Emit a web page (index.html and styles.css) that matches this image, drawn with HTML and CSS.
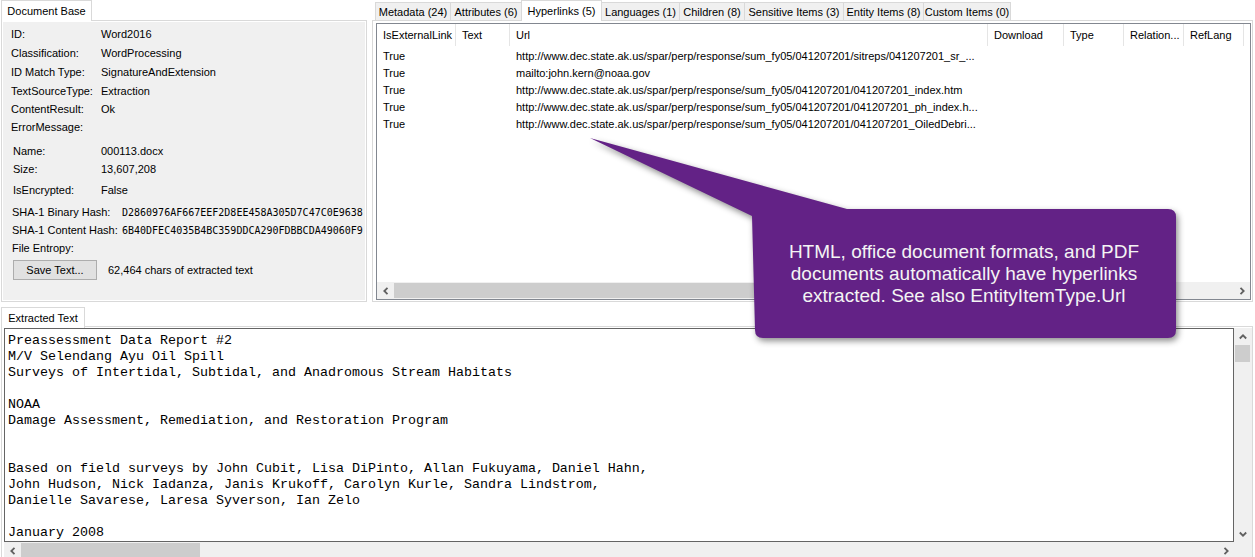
FILE: index.html
```html
<!DOCTYPE html>
<html>
<head>
<meta charset="utf-8">
<title>Document Base</title>
<link rel="stylesheet" href="styles.css">
</head>
<body>
<div class="app">
  <div class="top">
    <section class="tabctl left">
      <div class="tabstrip"><div class="tab sel t-doc">Document Base</div></div>
      <div class="page">
        <div class="gray">
          <div class="kv h19"><span class="k">ID:</span><span class="v">Word2016</span></div>
          <div class="kv h19"><span class="k">Classification:</span><span class="v">WordProcessing</span></div>
          <div class="kv h19"><span class="k">ID Match Type:</span><span class="v">SignatureAndExtension</span></div>
          <div class="kv h19"><span class="k">TextSourceType:</span><span class="v">Extraction</span></div>
          <div class="kv"><span class="k">ContentResult:</span><span class="v">Ok</span></div>
          <div class="kv"><span class="k">ErrorMessage:</span><span class="v"></span></div>
          <div class="kv g2 mt6"><span class="k">Name:</span><span class="v">000113.docx</span></div>
          <div class="kv g2"><span class="k">Size:</span><span class="v">13,607,208</span></div>
          <div class="kv g2 mt3"><span class="k">IsEncrypted:</span><span class="v">False</span></div>
          <div class="kv g3 mt4"><span class="k">SHA-1 Binary Hash:</span><span class="v hash">D2860976AF667EEF2D8EE458A305D7C47C0E9638</span></div>
          <div class="kv g3"><span class="k">SHA-1 Content Hash:</span><span class="v hash">6B40DFEC4035B4BC359DDCA290FDBBCDA49060F9</span></div>
          <div class="kv g3"><span class="k">File Entropy:</span><span class="v"></span></div>
          <div class="btnrow">
            <button class="btn" type="button">Save Text...</button>
            <span class="btnnote">62,464 chars of extracted text</span>
          </div>
        </div>
      </div>
    </section>

    <section class="tabctl right">
      <div class="tabstrip pad3">
        <div class="tab t-meta">Metadata (24)</div>
        <div class="tab t-attr">Attributes (6)</div>
        <div class="tab sel t-hyp">Hyperlinks (5)</div>
        <div class="tab t-lang">Languages (1)</div>
        <div class="tab t-child">Children (8)</div>
        <div class="tab t-sens">Sensitive Items (3)</div>
        <div class="tab t-ent">Entity Items (8)</div>
        <div class="tab t-cust">Custom Items (0)</div>
      </div>
      <div class="page rpage">
        <div class="listview">
          <div class="lv-row lv-head">
            <div class="c">IsExternalLink</div>
            <div class="c">Text</div>
            <div class="c">Url</div>
            <div class="c">Download</div>
            <div class="c">Type</div>
            <div class="c">Relation...</div>
            <div class="c">RefLang</div>
            <div class="c last"></div>
          </div>
          <div class="lv-body">
            <div class="lv-row">
              <div class="c">True</div><div class="c"></div>
              <div class="c">http://www.dec.state.ak.us/spar/perp/response/sum_fy05/041207201/sitreps/041207201_sr_...</div>
              <div class="c"></div><div class="c"></div><div class="c"></div><div class="c"></div><div class="c"></div>
            </div>
            <div class="lv-row">
              <div class="c">True</div><div class="c"></div>
              <div class="c">mailto:john.kern@noaa.gov</div>
              <div class="c"></div><div class="c"></div><div class="c"></div><div class="c"></div><div class="c"></div>
            </div>
            <div class="lv-row">
              <div class="c">True</div><div class="c"></div>
              <div class="c">http://www.dec.state.ak.us/spar/perp/response/sum_fy05/041207201/041207201_index.htm</div>
              <div class="c"></div><div class="c"></div><div class="c"></div><div class="c"></div><div class="c"></div>
            </div>
            <div class="lv-row">
              <div class="c">True</div><div class="c"></div>
              <div class="c">http://www.dec.state.ak.us/spar/perp/response/sum_fy05/041207201/041207201_ph_index.h...</div>
              <div class="c"></div><div class="c"></div><div class="c"></div><div class="c"></div><div class="c"></div>
            </div>
            <div class="lv-row">
              <div class="c">True</div><div class="c"></div>
              <div class="c">http://www.dec.state.ak.us/spar/perp/response/sum_fy05/041207201/041207201_OiledDebri...</div>
              <div class="c"></div><div class="c"></div><div class="c"></div><div class="c"></div><div class="c"></div>
            </div>
          </div>
          <div class="hbar">
            <div class="sbtn"><svg width="8" height="8" viewBox="0 0 8 8"><path d="M5.5 0.8 L2.3 4 L5.5 7.2" stroke="#606060" stroke-width="1.8" fill="none"/></svg></div>
            <div class="hthumb lvthumb"></div>
            <div class="sspace"></div>
            <div class="sbtn"><svg width="8" height="8" viewBox="0 0 8 8"><path d="M2.5 0.8 L5.7 4 L2.5 7.2" stroke="#606060" stroke-width="1.8" fill="none"/></svg></div>
          </div>
        </div>
      </div>
    </section>
  </div>

  <section class="tabctl bottom">
    <div class="tabstrip bstrip"><div class="tab sel t-ext">Extracted Text</div></div>
    <div class="page bpage">
      <div class="textgrid">
        <pre class="text">Preassessment Data Report #2
M/V Selendang Ayu Oil Spill
Surveys of Intertidal, Subtidal, and Anadromous Stream Habitats

NOAA
Damage Assessment, Remediation, and Restoration Program


Based on field surveys by John Cubit, Lisa DiPinto, Allan Fukuyama, Daniel Hahn,
John Hudson, Nick Iadanza, Janis Krukoff, Carolyn Kurle, Sandra Lindstrom,
Danielle Savarese, Laresa Syverson, Ian Zelo

January 2008
</pre>
        <div class="vbar">
          <div class="vbtn"><svg width="8" height="8" viewBox="0 0 8 8"><path d="M0.8 5.5 L4 2.3 L7.2 5.5" stroke="#606060" stroke-width="1.8" fill="none"/></svg></div>
          <div class="vthumb"></div>
          <div class="sspace"></div>
          <div class="vbtn"><svg width="8" height="8" viewBox="0 0 8 8"><path d="M0.8 2.5 L4 5.7 L7.2 2.5" stroke="#606060" stroke-width="1.8" fill="none"/></svg></div>
        </div>
        <div class="hbar bhbar">
          <div class="sbtn"><svg width="8" height="8" viewBox="0 0 8 8"><path d="M5.5 0.8 L2.3 4 L5.5 7.2" stroke="#606060" stroke-width="1.8" fill="none"/></svg></div>
          <div class="hthumb txthumb"></div>
          <div class="sspace"></div>
          <div class="sbtn"><svg width="8" height="8" viewBox="0 0 8 8"><path d="M2.5 0.8 L5.7 4 L2.5 7.2" stroke="#606060" stroke-width="1.8" fill="none"/></svg></div>
        </div>
        <div class="corner"></div>
      </div>
    </div>
  </section>

  <div class="callout">
    <svg class="callout-shape" width="620" height="225" viewBox="0 0 620 225">
      <path d="M10 8 L267 79 L588 79 Q596 79 596 87 L596 200 Q596 208 588 208 L183 208 Q175 208 175 200 L172 86 Z" fill="#632286"/>
    </svg>
    <div class="callout-text">HTML, office document formats, and PDF<br>documents automatically have hyperlinks<br>extracted. See also EntityItemType.Url</div>
  </div>
</div>
</body>
</html>
```

FILE: styles.css
```css
* { box-sizing: border-box; }
html, body { margin: 0; padding: 0; }
body {
  width: 1255px;
  height: 557px;
  overflow: hidden;
  background: #fff;
  font-family: "Liberation Sans", Arial, sans-serif;
  font-size: 11px;
  color: #000;
}
.app { position: relative; width: 1255px; height: 557px; overflow: hidden; }

.top { display: flex; height: 302px; }
.tabctl { display: flex; flex-direction: column; }

.tabstrip { display: flex; height: 20px; position: relative; z-index: 1; flex: none; }
.pad3 { padding-left: 3px; }
.tab {
  flex: none;
  height: 18px;
  margin-top: 2px;
  margin-right: -1px;
  border: 1px solid #d9d9d9;
  border-bottom: none;
  background: #f0f0f0;
  display: flex;
  align-items: center;
  justify-content: center;
  white-space: nowrap;
}
.tab.sel { height: 21px; margin-top: 0; background: #fff; position: relative; z-index: 2; }

.t-doc { width: 91px; }
.t-meta { width: 76px; }
.t-attr { width: 72px; }
.t-hyp { width: 81px; }
.t-lang { width: 79px; }
.t-child { width: 66px; }
.t-sens { width: 100px; }
.t-ent { width: 81px; }
.t-cust { width: 88px; }

.page { flex: 1; border: 1px solid #d9d9d9; background: #fff; }

/* left panel */
.left { width: 366px; margin-left: 1px; }
.left .page { padding: 1px; }
.gray { height: 100%; background: #f0f0f0; padding: 2px 0 0 8px; }
.kv { display: flex; align-items: center; height: 18px; white-space: nowrap; }
.kv.h19 { height: 19px; }
.kv .k { width: 90px; flex: none; }
.kv.g2 { padding-left: 2px; }
.kv.g2 .k { width: 88px; }
.kv.g3 { padding-left: 1px; }
.kv.g3 .k { width: 110px; }
.hash { font-family: "DejaVu Sans Mono", "Liberation Mono", monospace; font-size: 10px; }
.mt6 { margin-top: 6px; }
.mt4 { margin-top: 4px; }
.mt3 { margin-top: 3px; }
.btnrow { display: flex; align-items: center; margin-top: 3px; padding-left: 2px; height: 20px; }
.btn {
  width: 84px;
  height: 20px;
  border: 1px solid #adadad;
  background: #e1e1e1;
  font-family: "Liberation Sans", Arial, sans-serif;
  font-size: 11px;
  color: #000;
  padding: 0;
  margin: 0;
}
.btnnote { margin-left: 11px; }

/* right panel */
.right { width: 881px; margin-left: 5px; }
.rpage { padding: 2px 2px 1px 3px; display: flex; }
.listview {
  flex: 1;
  border: 1px solid #828790;
  display: flex;
  flex-direction: column;
  background: #fff;
}
.lv-row {
  display: grid;
  grid-template-columns: 79px 54px 478px 76px 60px 60px 60px 1fr;
  height: 17px;
  align-items: center;
}
.lv-row .c {
  padding-left: 6px;
  white-space: nowrap;
  overflow: hidden;
}
.lv-head { height: 22px; align-items: stretch; }
.lv-head .c {
  border-right: 1px solid #e5e5e5;
  display: flex;
  align-items: center;
}
.lv-head .c.last { border-right: none; }
.lv-body { flex: 1; padding-top: 1px; }

.hbar { height: 17px; display: flex; background: #f0f0f0; flex: none; }
.sbtn { width: 17px; flex: none; display: flex; align-items: center; justify-content: center; }
.sspace { flex: 1; }
.hthumb { background: #cdcdcd; margin: 1px 0; flex: none; }
.lvthumb { width: 756px; }
.txthumb { width: 179px; }

/* bottom panel */
.bottom { width: 1252px; height: 249px; margin-left: 1px; margin-top: 5px; }
.bstrip { height: 19px; }
.t-ext { width: 84px; height: 20px; }
.bpage { padding: 1px 0 2px 2px; }
.textgrid {
  height: 100%;
  display: grid;
  grid-template-columns: 1fr 18px;
  grid-template-rows: 1fr 17px;
}
.text {
  margin: 0;
  border: 1px solid #646464;
  padding: 4px 3px 0 3px;
  overflow: hidden;
  font-family: "Liberation Mono", "Courier New", monospace;
  font-size: 13.333px;
  line-height: 16px;
  white-space: pre;
  color: #000;
}
.vbar { background: #f0f0f0; display: flex; flex-direction: column; }
.vbtn { height: 17px; flex: none; display: flex; align-items: center; justify-content: center; }
.vthumb { height: 17px; background: #cdcdcd; margin: 0 2px 0 1px; flex: none; }
.corner { background: #f0f0f0; }

/* callout overlay */
.callout {
  position: absolute;
  left: 580px;
  top: 130px;
  width: 620px;
  height: 225px;
  z-index: 10;
}
.callout-shape {
  position: absolute;
  left: 0;
  top: 0;
  filter: drop-shadow(2px 3px 3px rgba(0, 0, 0, 0.45));
}
.callout-text {
  position: absolute;
  left: 172px;
  top: 79px;
  width: 424px;
  height: 129px;
  display: flex;
  align-items: center;
  justify-content: center;
  text-align: center;
  color: #f4f4f4;
  font-family: "Liberation Sans", Arial, sans-serif;
  font-size: 19px;
  line-height: 22px;
}
```
